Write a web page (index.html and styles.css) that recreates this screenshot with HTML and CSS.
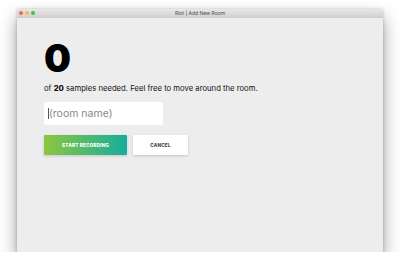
FILE: index.html
```html
<!DOCTYPE html>
<html>
<head>
<meta charset="utf-8">
<link rel="stylesheet" href="styles.css">
</head>
<body>
<div class="window">
  <div class="titlebar">
    <div class="lights">
      <span class="light red"></span>
      <span class="light yellow"></span>
      <span class="light green"></span>
    </div>
    <div class="title">Riot | Add New Room</div>
  </div>
  <div class="content">
    <div class="count">0</div>
    <p class="info">of <b>20</b> samples needed. Feel free to move around the room.</p>
    <div class="field"><span class="caret"></span><span class="placeholder">(room name)</span></div>
    <div class="actions">
      <button class="btn primary">START RECORDING</button>
      <button class="btn secondary">CANCEL</button>
    </div>
  </div>
</div>
</body>
</html>
```
FILE: styles.css
```css
html, body { margin: 0; padding: 0; background: #fff; }
body { padding: 9px 17px 0 17px; font-family: "Inter", "Open Sans", sans-serif; }
.window {
  width: 366px; height: 243px; background: #ededed;
  box-shadow: 0 9px 16px rgba(0,0,0,0.4), 0 0 3px rgba(0,0,0,0.2);
  display: flex; flex-direction: column;
}
.titlebar {
  height: 8px; position: relative;
  background: linear-gradient(#e8e6e8, #d3d1d3);
  border-bottom: 1px solid #cfcdcf;
  display: flex; align-items: center;
}
.lights { display: flex; gap: 2px; padding-left: 2px; }
.light { width: 4px; height: 4px; border-radius: 50%; display: block; }
.red { background: #fc605c; }
.yellow { background: #fdbc40; }
.green { background: #34c84a; }
.title {
  position: absolute; left: 0; right: 0; top: 0; text-align: center;
  font-size: 5px; line-height: 8px; color: #4d4d4d;
}
.content { padding: 25px 27px 0 27px; }
.count { font-size: 38px; font-weight: 900; line-height: 30px; color: #000; letter-spacing: 0; }
.info { margin: 11px 0 0 0; font-size: 7.7px; color: #111; line-height: 10px; }
.info b { font-weight: 800; }
.field {
  margin-top: 8px; width: 119px; height: 23px; background: #fff; border-radius: 2px;
  display: flex; align-items: center; padding-left: 4px; box-sizing: border-box;
}
.caret { width: 1px; height: 11px; background: #555; margin-right: 0; }
.placeholder { font-size: 10.5px; color: #888; }
.actions { display: flex; gap: 6px; margin-top: 10px; }
.btn {
  border: 0; height: 20px; font-family: inherit; font-size: 4.6px; font-weight: 800;
  letter-spacing: 0.2px; padding: 0; border-radius: 1px;
  box-shadow: 0 1px 3px rgba(0,0,0,0.18);
}
.primary { width: 83px; color: #fff; background: linear-gradient(90deg, #8cc63f, #16ad9d); }
.secondary { width: 55px; color: #444; background: #fff; }
```
